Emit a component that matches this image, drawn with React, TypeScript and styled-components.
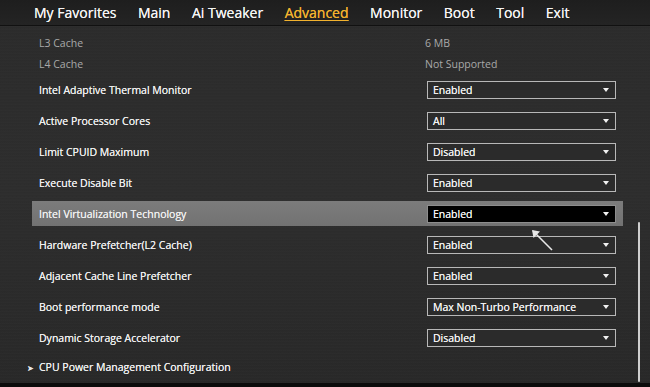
import React from "react";
import styled, { createGlobalStyle } from "styled-components";

const Global = createGlobalStyle`
  html, body { margin: 0; padding: 0; background: #1a1a1a; }
  body { font-family: "Open Sans", "Noto Sans", sans-serif; }
`;

const Page = styled.div`
  position: relative;
  width: 650px;
  height: 387px;
  overflow: hidden;
  display: flex;
  flex-direction: column;
  background:
    repeating-linear-gradient(0deg, rgba(255,255,255,0.012) 0px, rgba(255,255,255,0.012) 1px, rgba(0,0,0,0.02) 2px, rgba(0,0,0,0) 3px),
    linear-gradient(180deg, #2b2b2b 0%, #2d2d2d 50%, #282828 100%);
`;

const TopBar = styled.nav`
  height: 25px;
  flex: none;
  display: flex;
  align-items: center;
  padding-left: 34px;
  gap: 21.5px;
  background: linear-gradient(180deg, #1e1e1e, #242424);
  border-bottom: 1px solid #111;
`;

const Tab = styled.span<{ $active?: boolean }>`
  font-size: 14px;
  line-height: 20px;
  color: ${(p) => (p.$active ? "#f2b22e" : "#f4f4f4")};
  text-shadow: 0 0 0.4px currentColor;
  text-decoration: ${(p) => (p.$active ? "underline" : "none")};
  text-underline-offset: 2px;
  text-decoration-thickness: 1px;
  white-space: nowrap;
`;

const Content = styled.div`
  flex: 1;
  display: flex;
  flex-direction: column;
  padding-top: 6px;
`;

const InfoRow = styled.div`
  height: 21px;
  display: flex;
  align-items: center;
  margin-left: 32px;
  padding-left: 7px;
  font-size: 10.5px;
  color: #a9a9a9;
`;

const InfoLabel = styled.span`
  width: 386px;
`;

const SettingRow = styled.div`
  height: 31px;
  display: flex;
  align-items: center;
`;

const RowInner = styled.div<{ $selected?: boolean }>`
  margin-left: 32px;
  width: 584px;
  height: 25px;
  padding-left: 7px;
  display: flex;
  align-items: center;
  background: ${(p) => (p.$selected ? "linear-gradient(180deg,#7c7c7c,#727272)" : "transparent")};
`;

const Label = styled.span`
  width: 388px;
  font-size: 10.5px;
  color: #efefef;
  text-shadow: 0 0 0.3px currentColor;
  white-space: nowrap;
`;

const Dropdown = styled.div<{ $selected?: boolean }>`
  box-sizing: border-box;
  width: 189px;
  height: 18px;
  border: 1.5px solid ${(p) => (p.$selected ? "#8d8d8d" : "#b8b8b8")};
  background: ${(p) => (p.$selected ? "#000" : "#2b2b2b")};
  display: flex;
  align-items: center;
  justify-content: space-between;
  padding: 0 6px 0 5px;
  font-size: 10.5px;
  color: #f2f2f2;
  text-shadow: 0 0 0.3px currentColor;
`;

const Caret = styled.span`
  width: 0;
  height: 0;
  border-left: 3.5px solid transparent;
  border-right: 3.5px solid transparent;
  border-top: 4px solid #f2f2f2;
`;

const SubmenuRow = styled.div`
  height: 28px;
  display: flex;
  align-items: center;
  padding-left: 27px;
  gap: 5px;
  font-size: 10.5px;
  color: #efefef;
  text-shadow: 0 0 0.3px currentColor;
`;

const Chevron = styled.span`
  font-size: 8px;
  color: #e6e6e6;
`;

const BottomEdge = styled.div`
  height: 4px;
  flex: none;
  background: #0c0c0c;
`;

const ScrollBar = styled.div`
  position: absolute;
  left: 638px;
  top: 222px;
  width: 2px;
  height: 160px;
  border-radius: 1px;
  background: #cfcfcf;
`;

const Cursor = styled.svg`
  position: absolute;
  left: 530px;
  top: 228px;
`;

const tabs = ["My Favorites", "Main", "Ai Tweaker", "Advanced", "Monitor", "Boot", "Tool", "Exit"];

const settings: { label: string; value: string; selected?: boolean }[] = [
  { label: "Intel Adaptive Thermal Monitor", value: "Enabled" },
  { label: "Active Processor Cores", value: "All" },
  { label: "Limit CPUID Maximum", value: "Disabled" },
  { label: "Execute Disable Bit", value: "Enabled" },
  { label: "Intel Virtualization Technology", value: "Enabled", selected: true },
  { label: "Hardware Prefetcher(L2 Cache)", value: "Enabled" },
  { label: "Adjacent Cache Line Prefetcher", value: "Enabled" },
  { label: "Boot performance mode", value: "Max Non-Turbo Performance" },
  { label: "Dynamic Storage Accelerator", value: "Disabled" },
];

export default function App() {
  return (
    <>
      <Global />
      <Page>
        <TopBar>
          {tabs.map((t) => (
            <Tab key={t} $active={t === "Advanced"}>
              {t}
            </Tab>
          ))}
        </TopBar>
        <Content>
          <InfoRow>
            <InfoLabel>L3 Cache</InfoLabel>
            <span>6 MB</span>
          </InfoRow>
          <InfoRow>
            <InfoLabel>L4 Cache</InfoLabel>
            <span>Not Supported</span>
          </InfoRow>
          {settings.map((s) => (
            <SettingRow key={s.label}>
              <RowInner $selected={s.selected}>
                <Label>{s.label}</Label>
                <Dropdown $selected={s.selected}>
                  <span>{s.value}</span>
                  <Caret />
                </Dropdown>
              </RowInner>
            </SettingRow>
          ))}
          <SubmenuRow>
            <Chevron>➤</Chevron>
            <span>CPU Power Management Configuration</span>
          </SubmenuRow>
        </Content>
        <BottomEdge />
        <ScrollBar />
        <Cursor width="26" height="26" viewBox="0 0 26 26">
          <path d="M3 3 L22 22" stroke="#e8e8e8" strokeWidth="1.6" fill="none" />
          <path d="M2 2 L10 3.5 L3.5 10 Z" fill="#e8e8e8" />
        </Cursor>
      </Page>
    </>
  );
}
